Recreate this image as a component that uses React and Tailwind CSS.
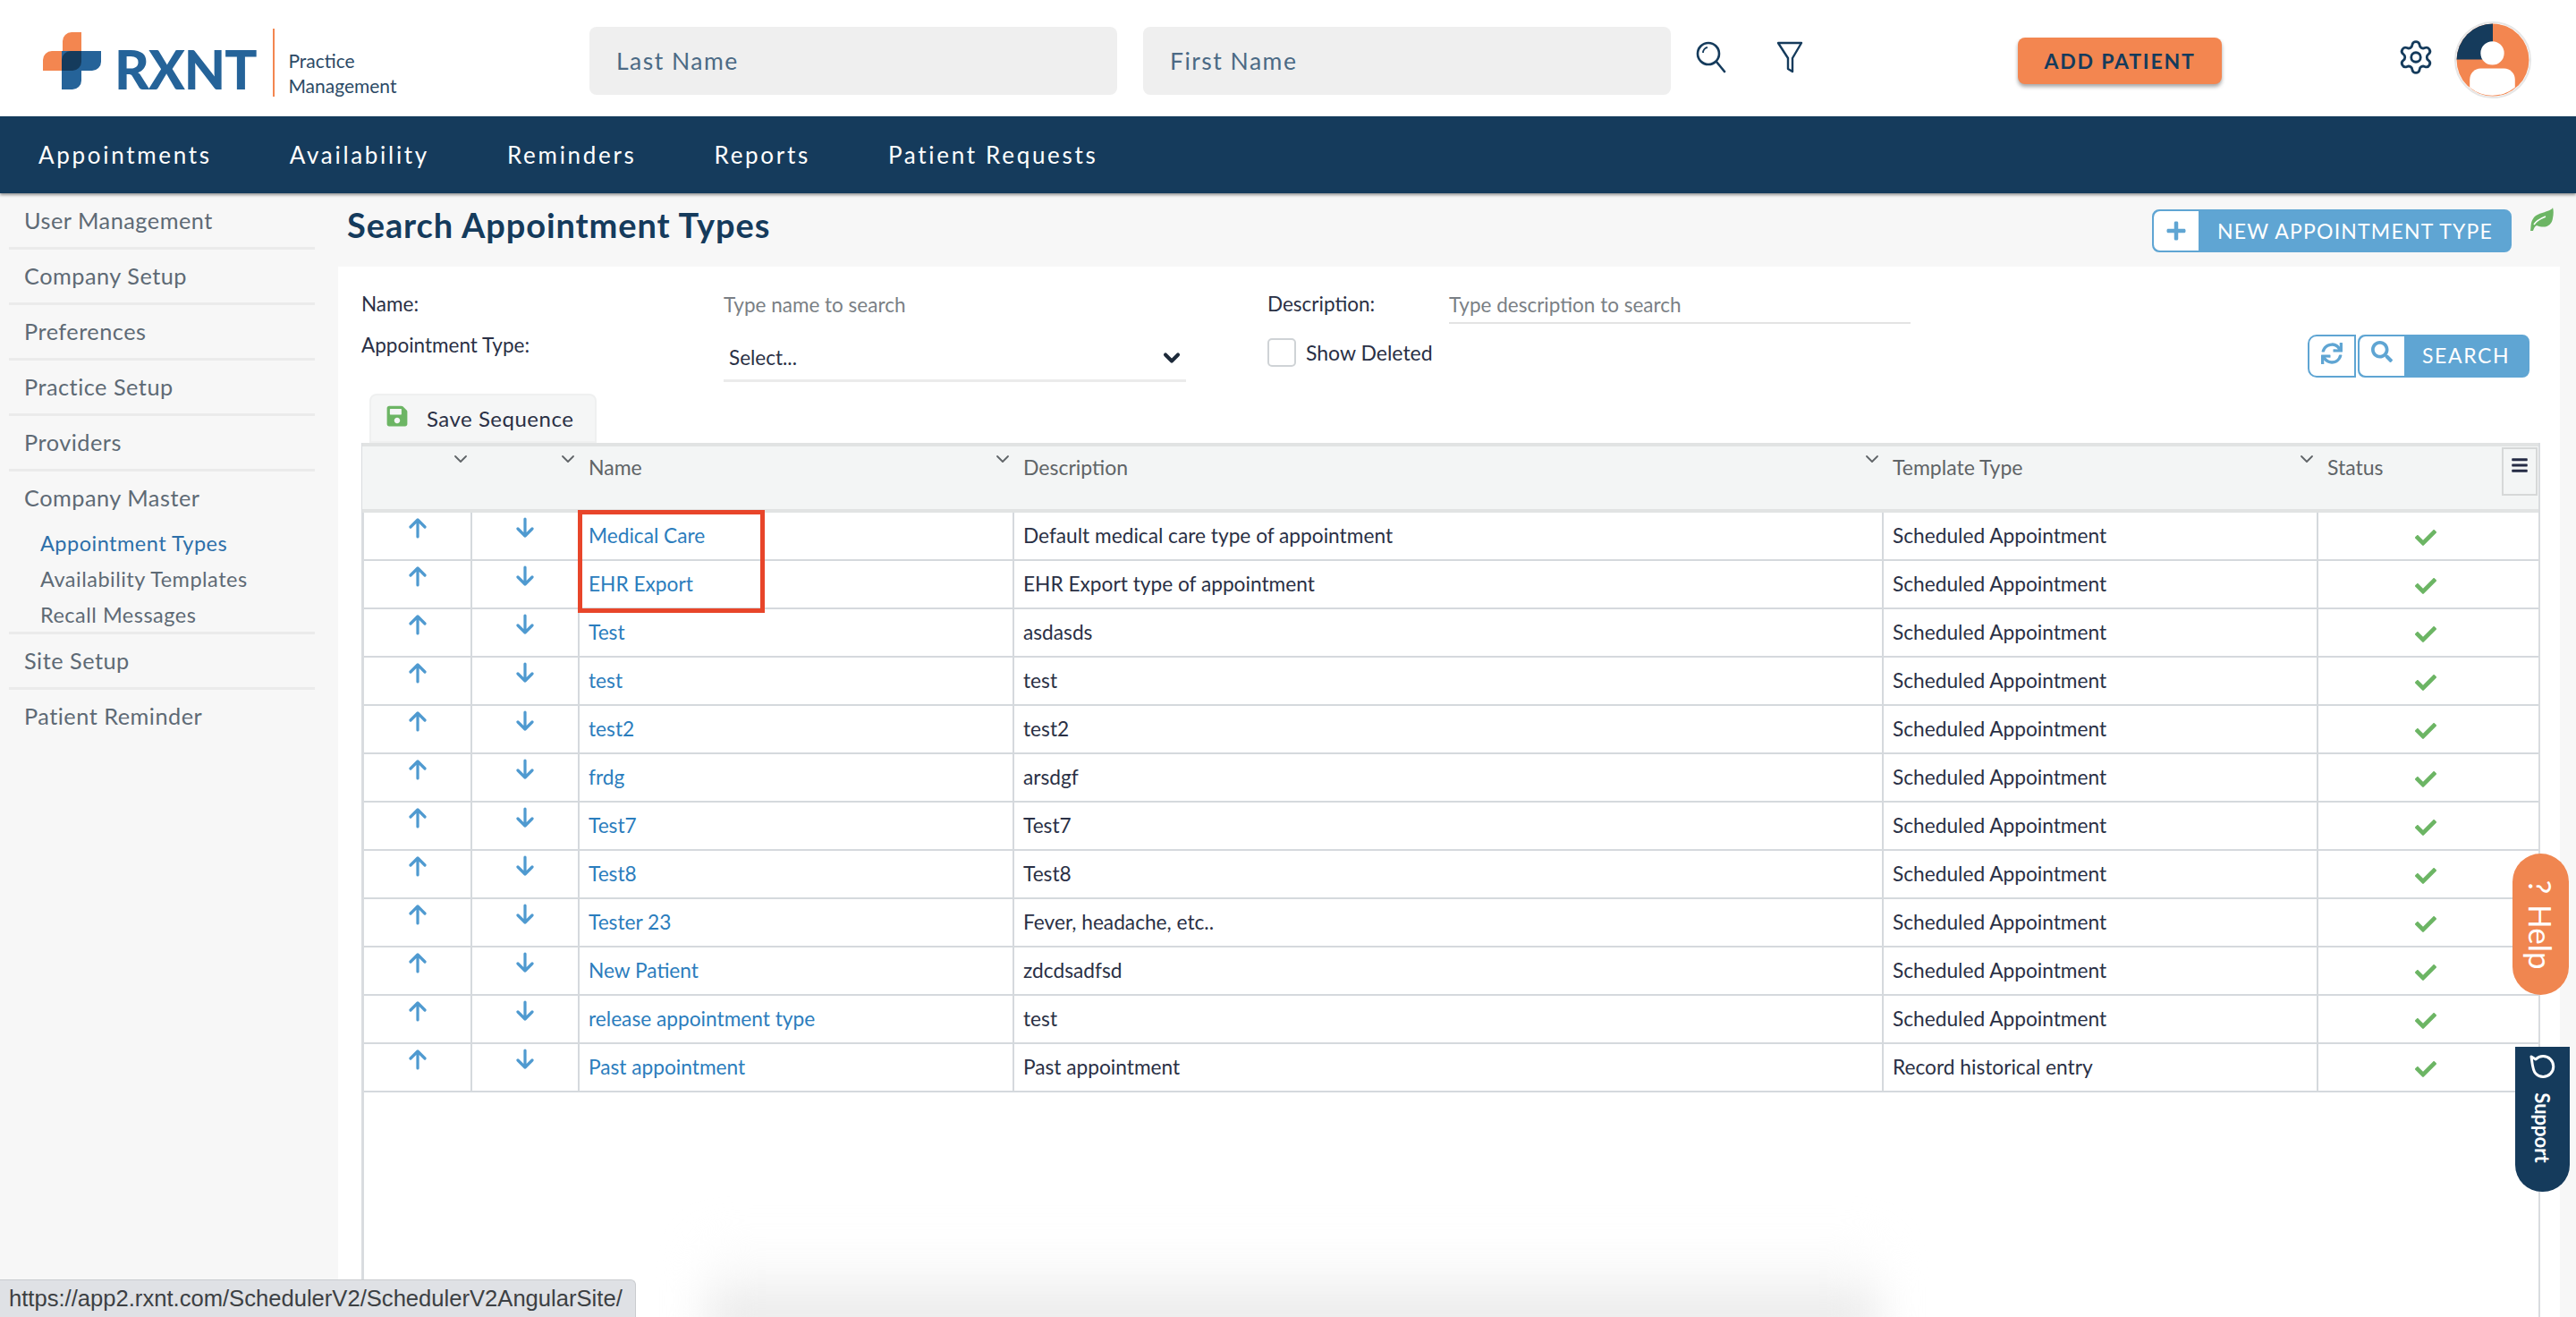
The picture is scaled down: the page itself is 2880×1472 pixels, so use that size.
import React from "react";
import { FaSave, FaSync, FaSearch, FaBars, FaCheck, FaPlus } from "react-icons/fa";
import { Settings, ChevronDown } from "lucide-react";

const side1 = ["User Management", "Company Setup", "Preferences", "Practice Setup", "Providers"];
const rows = [
  ["Medical Care", "Default medical care type of appointment", "Scheduled Appointment"],
  ["EHR Export", "EHR Export type of appointment", "Scheduled Appointment"],
  ["Test", "asdasds", "Scheduled Appointment"],
  ["test", "test", "Scheduled Appointment"],
  ["test2", "test2", "Scheduled Appointment"],
  ["frdg", "arsdgf", "Scheduled Appointment"],
  ["Test7", "Test7", "Scheduled Appointment"],
  ["Test8", "Test8", "Scheduled Appointment"],
  ["Tester 23", "Fever, headache, etc..", "Scheduled Appointment"],
  ["New Patient", "zdcdsadfsd", "Scheduled Appointment"],
  ["release appointment type", "test", "Scheduled Appointment"],
  ["Past appointment", "Past appointment", "Record historical entry"],
];

function Logo() {
  return (
    <div className="flex items-center">
      <svg width="65" height="64" viewBox="0 0 65 64" className="shrink-0">
        <path d="M22 21V10A10 10 0 0 1 32 0H43V43H0V31A10 10 0 0 1 10 21z" fill="#f38650" />
        <path d="M21 21H65V33A10 10 0 0 1 55 43H43V54A10 10 0 0 1 33 64H21z" fill="#256399" />
        <path d="M31 21H43V33A10 10 0 0 1 33 43H21V31A10 10 0 0 1 31 21z" fill="#153b5c" />
      </svg>
      <span className="ml-[15px] translate-y-[9px] text-[60px] leading-none font-black tracking-[-1px] text-[#256399]">RXNT</span>
      <div className="ml-[19px] h-[76px] w-[2px] translate-y-[2px] bg-[#f38650]" />
      <div className="ml-[15px] flex translate-y-[13px] flex-col gap-[7px] text-[21px] leading-[21px] text-[#2c4a66]">
        <span>Practice</span>
        <span>Management</span>
      </div>
    </div>
  );
}

function TopField({ label }) {
  return (
    <div className="flex h-[76px] w-[590px] items-center rounded-[8px] bg-[#efefef] pl-[30px] pt-[2px] text-[26.5px] tracking-[1.5px] text-[#4b6a85]">
      {label}
    </div>
  );
}

function Header() {
  return (
    <header className="flex h-[130px] items-center bg-white pl-[48px] pt-[6px]">
      <div className="w-[611px]"><Logo /></div>
      <div className="flex gap-[29px]">
        <TopField label="Last Name" />
        <TopField label="First Name" />
      </div>
      <svg width="34" height="36" viewBox="0 0 34 36" fill="none" stroke="#153b5c" strokeWidth="2.6" className="ml-[28px] -mt-[8px]">
        <circle cx="14" cy="14" r="12" />
        <path d="M23 23l9 11" strokeLinecap="round" />
        <path d="M8 13a6 6 0 0 1 5-6" strokeWidth="1.8" />
      </svg>
      <svg width="30" height="36" viewBox="0 0 30 36" fill="none" stroke="#153b5c" strokeWidth="2.4" className="ml-[56px] -mt-[8px]" strokeLinejoin="round">
        <path d="M2 2h26L18 19v15l-5-3V19z" />
      </svg>
      <button className="ml-[240px] h-[52px] w-[228px] rounded-[8px] bg-[#f38650] text-[23px] font-bold tracking-[1.8px] text-[#153b5c] shadow-[0_3px_4px_rgba(0,0,0,0.35)]">
        ADD PATIENT
      </button>
      <Settings size={42} color="#153b5c" strokeWidth={1.6} className="ml-[196px] -mt-[8px]" />
      <svg width="86" height="86" viewBox="0 0 85 85" className="ml-[22px] -mt-[2px]">
        <circle cx="42.5" cy="42.5" r="41.5" fill="white" stroke="#e6e6e6" strokeWidth="2" />
        <circle cx="42.5" cy="42.5" r="40" fill="#f38650" />
        <path d="M42.5 2.5A40 40 0 0 0 2.5 42H42.5z" fill="#153b5c" />
        <circle cx="42" cy="35" r="13" fill="white" />
        <path d="M17 73V64A12 12 0 0 1 29 52H55A12 12 0 0 1 67 64V73A40 40 0 0 1 17 73z" fill="white" />
      </svg>
    </header>
  );
}

function Nav() {
  return (
    <nav className="relative z-10 flex h-[86px] items-center gap-[87px] bg-[#153b5c] pl-[43px] text-[26px] tracking-[2.7px] text-white shadow-[0_2px_3px_rgba(0,0,0,0.4)]">
      {["Appointments", "Availability", "Reminders", "Reports", "Patient Requests"].map((t) => (
        <span key={t}>{t}</span>
      ))}
    </nav>
  );
}

function SideItem({ label }) {
  return (
    <div className="flex h-[62px] items-center border-b-[3px] border-[#ebebeb] pl-[17px] text-[25.3px] tracking-[0.5px] text-[#5e6a75]">
      {label}
    </div>
  );
}

function Sidebar() {
  return (
    <aside className="w-[352px] shrink-0 pl-[10px]">
      <div className="flex h-[63px] items-center border-b-[3px] border-[#ebebeb] pl-[17px] pt-[2px] text-[25.3px] tracking-[0.5px] text-[#5e6a75]">
        {side1[0]}
      </div>
      {side1.slice(1).map((s) => <SideItem key={s} label={s} />)}
      <div className="h-[182px] border-b-[3px] border-[#ebebeb] pl-[17px] pt-[14px] text-[#5e6a75]">
        <div className="text-[25.3px] leading-[30px] tracking-[0.5px]">Company Master</div>
        <div className="mt-[21px] flex flex-col gap-[10px] pl-[18px] text-[23.5px] leading-[30px] tracking-[0.5px]">
          <span className="text-[#2d6fa9]">Appointment Types</span>
          <span>Availability Templates</span>
          <span>Recall Messages</span>
        </div>
      </div>
      <SideItem label="Site Setup" />
      <div className="flex h-[60px] items-center pl-[17px] text-[25.3px] tracking-[0.5px] text-[#5e6a75]">Patient Reminder</div>
    </aside>
  );
}

function Filters() {
  return (
    <div className="flex h-[142px] justify-between pl-[26px] pr-[34px] pt-[26px]">
      <div className="grid grid-cols-[405px_608px_203px_516px] grid-rows-[38px_60px] text-[22.5px] text-[#2a3045]">
        <div className="leading-[32px]">Name:</div>
        <div className="leading-[34px] text-[#7a7f85]">Type name to search</div>
        <div className="leading-[32px]">Description:</div>
        <div className="h-[38px] border-b-[2px] border-[#e3e3e3] leading-[34px] text-[#7a7f85]">Type description to search</div>
        <div className="pt-[8px] leading-[32px]">Appointment Type:</div>
        <div className="mt-[13px] flex h-[52px] w-[517px] items-center justify-between border-b-[3px] border-[#ebebeb] pl-[6px] pr-[2px]">
          <span>Select...</span>
          <ChevronDown size={28} strokeWidth={3.5} color="#1d2a3a" />
        </div>
        <label className="col-span-2 mt-[16px] flex h-[32px] items-center gap-[11px] text-[23px]">
          <span className="h-[32px] w-[32px] rounded-[5px] border-[2px] border-[#cfd3d6] bg-white" />
          <span>Show Deleted</span>
        </label>
      </div>
      <div className="mt-[50px] flex h-[48px] gap-[2px]">
        <button className="flex w-[54px] items-center justify-center rounded-l-[10px] border-[2px] border-[#5fa5d3] bg-white text-[#5fa5d3]">
          <FaSync size={24} className="-mt-[6px]" />
        </button>
        <button className="flex w-[192px] items-center rounded-[8px] border-[2px] border-[#5fa5d3] bg-[#5fa5d3] text-[23px] tracking-[1.6px] text-white">
          <span className="flex h-full w-[50px] items-center justify-center rounded-l-[7px] bg-white text-[#5fa5d3]">
            <FaSearch size={24} className="-mt-[10px]" />
          </span>
          <span className="ml-[20px] -mt-[1px]">SEARCH</span>
        </button>
      </div>
    </div>
  );
}

function Head({ label, chev }) {
  return (
    <div className="relative h-full pl-[12px] pt-[10px] leading-[26px] text-[#5f6467]">
      {label}
      {chev && <ChevronDown size={24} strokeWidth={1.8} color="#606468" className="absolute -right-[1px] top-[2px]" />}
    </div>
  );
}

function UpArrow() {
  return (
    <svg width="20" height="24" viewBox="0 0 20 24" fill="none" stroke="#4f9ad0" strokeWidth="3.2" strokeLinecap="round" strokeLinejoin="round">
      <path d="M10 22V3M2 11l8-8 8 8" />
    </svg>
  );
}

function DownArrow() {
  return (
    <svg width="20" height="24" viewBox="0 0 20 24" fill="none" stroke="#4f9ad0" strokeWidth="3.2" strokeLinecap="round" strokeLinejoin="round">
      <path d="M10 2v19M2 13l8 8 8-8" />
    </svg>
  );
}

function Table() {
  return (
    <div className="ml-[26px] flex w-[2436px] grow flex-col border-l-[3px] border-r-[2px] border-[#d9dcdf]">
      <div className="relative -ml-[2px] grid h-[78px] grid-cols-[121px_120px_486px_972px_486px_244px] border-y-[4px] border-[#e1e3e3] bg-[#f3f5f5] text-[23px]">
        <Head chev />
        <Head chev />
        <Head label="Name" chev />
        <Head label="Description" chev />
        <Head label="Template Type" chev />
        <Head label="Status" />
        <div className="absolute right-[1px] top-[1px] flex h-[54px] w-[40px] justify-center border-[2px] border-[#d6d8d8] pt-[8px]">
          <FaBars size={20} color="#252b45" />
        </div>
      </div>
      <div className="relative">
        {rows.map((r, i) => (
          <div key={i} className="grid h-[54px] grid-cols-[121px_120px_486px_972px_486px_244px] border-b-[2px] border-[#d5d9dd] text-[22.7px] text-[#2a3045]">
            <div className="flex justify-center border-r-[2px] border-[#d5d9dd] pt-[5px]"><UpArrow /></div>
            <div className="flex justify-center border-r-[2px] border-[#d5d9dd] pt-[5px]"><DownArrow /></div>
            <div className="flex items-center border-r-[2px] border-[#d5d9dd] pl-[10px] pt-[1px] text-[#2b7dbd]">{r[0]}</div>
            <div className="flex items-center border-r-[2px] border-[#d5d9dd] pl-[10px] pt-[1px]">{r[1]}</div>
            <div className="flex items-center border-r-[2px] border-[#d5d9dd] pl-[10px] pt-[1px]">{r[2]}</div>
            <div className="flex items-center justify-center pr-[4px] pt-[3px]"><FaCheck size={24} color="#6cb564" /></div>
          </div>
        ))}
        <div className="absolute left-[239px] -top-[3px] h-[115px] w-[209px] border-[5px] border-[#e8452a]" />
      </div>
    </div>
  );
}

export default function App() {
  return (
    <div className="relative flex h-[1472px] w-[2880px] flex-col overflow-hidden bg-[#f7f7f7] font-['Lato',sans-serif]">
      <Header />
      <Nav />
      <div className="flex grow">
        <Sidebar />
        <main className="ml-[26px] flex w-[2484px] flex-col">
          <div className="flex h-[82px]">
            <h1 className="ml-[10px] mt-[14px] text-[38px] leading-[42px] font-bold tracking-[0.9px] text-[#153b5c]">Search Appointment Types</h1>
            <button className="ml-auto mr-[54px] mt-[18px] flex h-[48px] w-[402px] items-center rounded-[8px] border-[2px] border-[#5fa5d3] bg-[#5fa5d3] text-[23px] tracking-[1.2px] text-white">
              <span className="flex h-full w-[50px] items-center justify-center rounded-l-[7px] bg-white text-[#5fa5d3]">
                <FaPlus size={24} />
              </span>
              <span className="ml-[21px] whitespace-nowrap">NEW APPOINTMENT TYPE</span>
            </button>
            <svg width="30" height="26" viewBox="0 0 30 26" className="absolute right-[24px] top-[232px]">
              <path d="M28 0C26 5 12 5 7 11C3 16 4 20 3 26H6C7 23 8 21 10 20C20 24 27 20 28 12C29 7 29 3 28 0Z" fill="#6cb564" />
              <path d="M7 19C10 14 15 12 20 10" fill="none" stroke="white" strokeWidth="1.5" />
            </svg>
          </div>
          <section className="flex w-[2484px] grow flex-col bg-white">
            <Filters />
            <button className="ml-[35px] flex h-[55px] w-[254px] items-center rounded-t-[8px] border-[2px] border-[#eff0f0] bg-[#f5f6f6] pl-[16px] text-[24px] tracking-[0.5px] text-[#2a3045]">
              <FaSave size={26} color="#6cb564" className="-mt-[6px]" />
              <span className="ml-[20px]">Save Sequence</span>
            </button>
            <Table />
          </section>
        </main>
      </div>

      <div className="absolute right-[8px] top-[954px] flex h-[158px] w-[63px] items-center justify-center rounded-[32px] bg-[#f08650]">
        <span className="flex rotate-90 items-center gap-[12px] whitespace-nowrap text-[35px] leading-none text-white">
          <span>?</span>
          <span>Help</span>
        </span>
      </div>
      <div className="absolute right-[7px] top-[1170px] flex h-[162px] w-[61px] flex-col items-center rounded-b-[30px] bg-[#153b5c] pt-[8px] text-white">
        <svg width="30" height="28" viewBox="0 0 30 28" fill="none" stroke="white" strokeWidth="3">
          <path d="M7 6a11.5 11.5 0 1 1 0 16C3 18 3 8 2 3z" strokeLinejoin="round" />
        </svg>
        <span className="mt-[38px] rotate-90 whitespace-nowrap text-[22px] font-bold">Support</span>
      </div>

      <div className="absolute -bottom-[20px] left-[790px] h-[110px] w-[1310px] bg-gradient-to-b from-transparent via-[#f8f8f8] via-50% to-[#dcdcdc] blur-[24px]" />
      <div className="absolute bottom-0 left-0 flex h-[42px] w-[711px] items-center rounded-tr-[6px] border-r border-t border-[#c9cbcf] bg-[#dfe1e5] pl-[10px] font-['Liberation_Sans',sans-serif] text-[25.6px] text-[#3c4043]">
        https://app2.rxnt.com/SchedulerV2/SchedulerV2AngularSite/
      </div>
    </div>
  );
}
